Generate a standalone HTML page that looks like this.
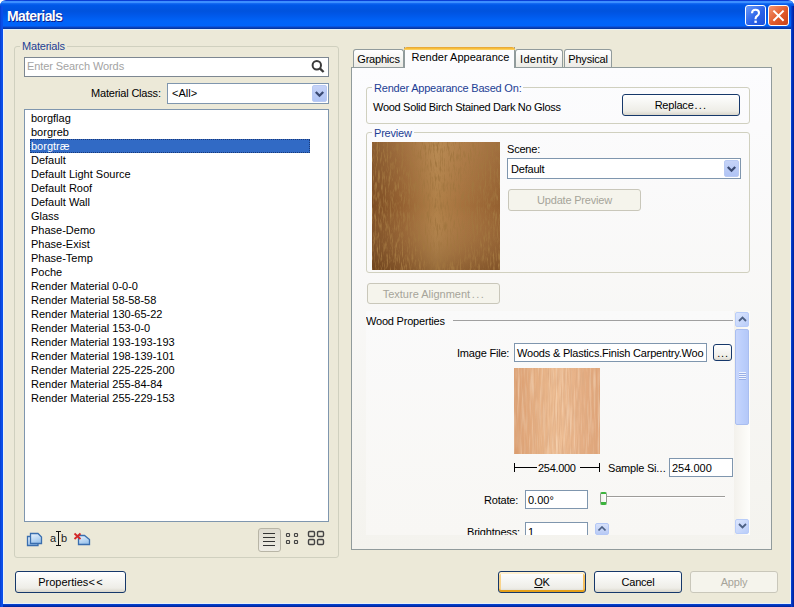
<!DOCTYPE html>
<html><head><meta charset="utf-8">
<style>
*{box-sizing:border-box;margin:0;padding:0}
html,body{width:794px;height:607px;overflow:hidden;background:#fff}
body{position:relative;font-family:"Liberation Sans",sans-serif;font-size:11px;color:#000;letter-spacing:-0.2px}
.a{position:absolute}
.t{position:absolute;white-space:nowrap;line-height:13px;font-size:11px}
#win{position:absolute;left:0;top:0;width:794px;height:607px;border-radius:6px 6px 0 0;overflow:hidden;
 background:linear-gradient(to right,#0030B0 0,#0842D0 1px,#0850E8 2px,#0850E8 3px,transparent 3px,transparent 791px,#0848E0 791px,#0038C0 793px,#002C98 794px)}
#title{position:absolute;left:0;top:0;width:794px;height:29px;
 background:linear-gradient(to bottom,#0B3FD6 0,#0B3FD6 1px,#3D8FFF 1px,#3D8FFF 3px,#1A6FF5 3px,#0058E8 5px,#0053DE 11px,#0056E6 14px,#0063F8 21px,#0064FA 26px,#0D47C8 27px,#003399 29px)}
#client{position:absolute;left:3px;top:29px;width:788px;height:575px;background:#ECE9D8;border-top:1px solid #E4F0FA;border-left:1px solid #E8F2FA;border-right:1px solid #E8F0F8;border-bottom:1px solid #E8F0F8}
#bottomb{position:absolute;left:0;top:604px;width:794px;height:3px;background:linear-gradient(to bottom,#0846D8,#0030B0 60%,#00229A)}
.ttl{position:absolute;left:7px;top:7px;letter-spacing:-0.6px;color:#fff;font-weight:bold;font-size:14px;line-height:16px;padding-top:1px;text-shadow:1px 1px 0 #0A1E8C}
.cap{position:absolute;width:21px;height:21px;border:1px solid #fff;border-radius:3px}
.grp{position:absolute;border:1px solid #D0D0BF;border-radius:3px}
.gcap{position:absolute;color:#1C3E94;white-space:nowrap;line-height:13px;padding:0 2px}
.edit{position:absolute;background:#fff;border:1px solid #7F96AE}
.btn{position:absolute;border:1px solid #16386A;border-radius:3px;background:linear-gradient(to bottom,#FFFFFF 0,#F6F6F3 40%,#EEEDE7 80%,#D9D6CB 100%);text-align:center;line-height:21px}
.dbtn{position:absolute;border:1px solid #C9C7BA;border-radius:3px;background:#F5F4EC;color:#A6A49A;text-align:center;line-height:21px}
.ddb{position:absolute;width:15px;height:17px;border-radius:2px;background:linear-gradient(to bottom,#C6D3F7,#B0C4F5);border:1px solid #B9CAF3}
.tab{position:absolute;border:1px solid #919B9C;border-bottom:none;border-radius:3px 3px 0 0;background:linear-gradient(to bottom,#FFFFFF,#ECEBE6);text-align:center;line-height:19px}
.sb{position:absolute;border-radius:2px;background:linear-gradient(135deg,#DCE6FE,#B9CDF9);border:1px solid #B9CDF9}
</style></head><body>
<div id="win">
 <div id="title"></div>
 <div class="ttl">Materials</div>
 <div class="cap" style="left:745px;top:5px;background:linear-gradient(135deg,#6A9AF8,#2A62E8 55%,#1E50D8)"></div>
 <div class="cap" style="left:768px;top:5px;background:linear-gradient(135deg,#F49470,#E05A2A 55%,#C84218)"></div>
 <svg class="a" style="left:745px;top:5px" width="21" height="21"><path d="M7 8.3 Q7 4.8 10.5 4.8 Q14 4.8 14 8 Q14 9.9 12.1 11 Q10.6 11.9 10.6 13.6 L10.6 14.3" stroke="#fff" stroke-width="2.1" fill="none"/><rect x="9.4" y="15.6" width="2.4" height="2.3" fill="#fff"/></svg>
 <svg class="a" style="left:768px;top:5px" width="21" height="21"><path d="M5.4 5.6 L15.6 15.8 M15.6 5.6 L5.4 15.8" stroke="#fff" stroke-width="2" fill="none"/></svg>
 <div id="client"></div>
 <div id="bottomb"></div>
 <div class="a" style="left:0;top:6px;width:3px;height:601px;background:linear-gradient(to right,#0638C8,#0A4CE4 1px,#0A50EC)"></div>
 <div class="a" style="left:791px;top:6px;width:3px;height:601px;background:linear-gradient(to right,#0844D8,#0030B8 1.5px,#001C98)"></div>
</div>

<!-- left group -->
<div class="grp" style="left:14px;top:46px;width:325px;height:512px"></div>
<div class="gcap" style="left:20px;top:40px;background:#ECE9D8">Materials</div>
<div class="edit" style="left:24px;top:57px;width:305px;height:20px;border-color:#7D8791"></div>
<div class="t" style="left:27px;top:60px;color:#A3A3A3;letter-spacing:-0.1px">Enter Search Words</div>
<svg class="a" style="left:309px;top:58px" width="18" height="18"><circle cx="7.8" cy="7.3" r="4.2" stroke="#3A3A3A" stroke-width="2" fill="none"/><path d="M10.8 10.4 L14.6 14" stroke="#3A3A3A" stroke-width="2.4" fill="none"/></svg>
<div class="t" style="left:91px;top:87px">Material Class:</div>
<div class="edit" style="left:167px;top:83px;width:162px;height:21px"></div>
<div class="t" style="left:172px;top:87px;letter-spacing:0">&lt;All&gt;</div>
<div class="ddb" style="left:312px;top:85px"></div>
<svg class="a" style="left:312px;top:85px" width="16" height="17"><path d="M3.8 7 L7.5 10.7 L11.2 7" stroke="#3A4A72" stroke-width="2.3" fill="none"/></svg>
<div class="edit" style="left:24px;top:109px;width:305px;height:413px"></div>
<div class="a" style="left:30px;top:139px;width:280px;height:14px;background:#316AC5;border:1px dotted #1A3A78"></div>
<div class="t" style="left:31px;top:111px;line-height:14px;letter-spacing:0">borgflag<br>borgreb<br><span style="color:#fff">borgtræ</span><br>Default<br>Default Light Source<br>Default Roof<br>Default Wall<br>Glass<br>Phase-Demo<br>Phase-Exist<br>Phase-Temp<br>Poche<br>Render Material 0-0-0<br>Render Material 58-58-58<br>Render Material 130-65-22<br>Render Material 153-0-0<br>Render Material 193-193-193<br>Render Material 198-139-101<br>Render Material 225-225-200<br>Render Material 255-84-84<br>Render Material 255-229-153</div>

<svg class="a" style="left:26px;top:531px" width="18" height="17"><defs><linearGradient id="ic" x1="0" y1="0" x2="0.4" y2="1"><stop offset="0" stop-color="#EEF6FE"/><stop offset="1" stop-color="#9CC4EC"/></linearGradient></defs><path d="M1.5 5.5 H9 L12 8.5 V14.5 H1.5 Z" fill="url(#ic)" stroke="#3A6EAE" stroke-width="1.3"/><path d="M4.5 2.5 H12 L15.5 6 V12.5 H4.5 Z" fill="url(#ic)" stroke="#3A6EAE" stroke-width="1.3"/></svg>
<div class="t" style="left:50px;top:532px;color:#222">a</div>
<div class="t" style="left:61px;top:532px;color:#222">b</div>
<svg class="a" style="left:55px;top:530px" width="8" height="17" shape-rendering="crispEdges"><path d="M1 1.5 H6 M3.5 1 V16 M1 15.5 H6" stroke="#111" stroke-width="1" fill="none"/></svg>
<svg class="a" style="left:72px;top:530px" width="20" height="17"><path d="M6.5 5.5 H12.5 L17.5 9.5 V14.5 H6.5 Z" fill="url(#ic)" stroke="#3A6EAE" stroke-width="1.3"/><path d="M2.5 3.5 L8.5 9 M8.5 3.5 L2.5 9" stroke="#D42828" stroke-width="1.8"/></svg>
<div class="a" style="left:258px;top:528px;width:23px;height:24px;border:1px solid #B8B5A6;border-radius:3px;background:linear-gradient(to bottom,#DEDBD0,#EEECE4)"></div>
<div class="a" style="left:263px;top:533px;width:12px;height:1px;background:#333;box-shadow:0 4px 0 #333,0 8px 0 #333,0 12px 0 #333"></div>
<svg class="a" style="left:284px;top:532px" width="16" height="12"><rect x="2.5" y="1.5" width="3" height="3" rx="0.8" fill="none" stroke="#444" stroke-width="1.2"/><rect x="10.5" y="1.5" width="3" height="3" rx="0.8" fill="none" stroke="#444" stroke-width="1.2"/><rect x="2.5" y="8.5" width="3" height="3" rx="0.8" fill="none" stroke="#444" stroke-width="1.2"/><rect x="10.5" y="8.5" width="3" height="3" rx="0.8" fill="none" stroke="#444" stroke-width="1.2"/></svg>
<svg class="a" style="left:306px;top:530px" width="20" height="17"><rect x="2.5" y="1.5" width="6" height="5" rx="1.2" fill="none" stroke="#444" stroke-width="1.4"/><rect x="11.5" y="1.5" width="6" height="5" rx="1.2" fill="none" stroke="#444" stroke-width="1.4"/><rect x="2.5" y="9.5" width="6" height="5" rx="1.2" fill="none" stroke="#444" stroke-width="1.4"/><rect x="11.5" y="9.5" width="6" height="5" rx="1.2" fill="none" stroke="#444" stroke-width="1.4"/></svg>

<div class="btn" style="left:15px;top:571px;width:111px;height:22px;line-height:20px;letter-spacing:0">Properties<span style="letter-spacing:1.5px">&lt;</span>&lt;</div>

<!-- tabs -->
<div class="a" style="left:351px;top:67px;width:421px;height:483px;border:1px solid #919B9C;background:linear-gradient(to bottom,#FCFCFE,#F4F3EE)"></div>
<div class="tab" style="left:353px;top:49px;width:51px;height:18px">Graphics</div>
<div class="tab" style="left:515px;top:49px;width:48px;height:18px;letter-spacing:0.3px">Identity</div>
<div class="tab" style="left:564px;top:49px;width:48px;height:18px">Physical</div>
<div class="a" style="left:404px;top:47px;width:111px;height:21px;border:1px solid #919B9C;border-bottom:none;border-top:none;background:#FCFCFE;text-align:center;line-height:21px;letter-spacing:0;padding-left:2px">Render Appearance</div>
<div class="a" style="left:404px;top:47px;width:111px;height:3px;border-radius:4px 4px 0 0;background:linear-gradient(to bottom,#E0A040,#F5B830 40%,#FFD870)"></div>

<div class="grp" style="left:366px;top:87px;width:384px;height:37px"></div>
<div class="gcap" style="left:372px;top:82px;background:#FCFCFE">Render Appearance Based On:</div>
<div class="t" style="left:373px;top:101px;letter-spacing:-0.3px">Wood Solid Birch Stained Dark No Gloss</div>
<div class="btn" style="left:622px;top:94px;width:118px;height:22px">Replace<span style="letter-spacing:1.2px;margin-left:1px">...</span></div>

<div class="grp" style="left:366px;top:132px;width:384px;height:141px"></div>
<div class="gcap" style="left:372px;top:127px;background:#FBFBFD">Preview</div>
<div class="a" style="left:372px;top:142px;width:128px;height:128px;background:linear-gradient(to right,#8A5526,#98622F 20%,#B0804C 50%,#A87846 62%,#9C6834 85%,#976230)"><svg width="128" height="128"><defs><filter id="n1" x="0" y="0" width="100%" height="100%"><feTurbulence type="fractalNoise" baseFrequency="0.6 0.1" numOctaves="3" seed="4"/><feColorMatrix type="matrix" values="0 0 0 0 0.36  0 0 0 0 0.18  0 0 0 0 0.05  3.2 0 0 0 -1.5"/></filter>
<linearGradient id="g1" x1="0" y1="0" x2="1" y2="0"><stop offset="0" stop-color="#7C4C22"/><stop offset="0.25" stop-color="#966232"/><stop offset="0.5" stop-color="#B08048"/><stop offset="0.7" stop-color="#A6723E"/><stop offset="1" stop-color="#946030"/></linearGradient>
<linearGradient id="v1" x1="0" y1="0" x2="0" y2="1"><stop offset="0" stop-color="#FFE0B0" stop-opacity="0.12"/><stop offset="0.5" stop-color="#FFE0B0" stop-opacity="0"/><stop offset="1" stop-color="#3A2008" stop-opacity="0.22"/></linearGradient></defs>
<rect width="128" height="128" fill="url(#g1)"/><rect width="128" height="128" fill="url(#v1)"/><rect width="128" height="128" filter="url(#n1)"/>
</svg></div>
<div class="t" style="left:507px;top:143px">Scene:</div>
<div class="edit" style="left:507px;top:158px;width:234px;height:21px"></div>
<div class="t" style="left:511px;top:163px">Default</div>
<div class="ddb" style="left:724px;top:160px"></div>
<svg class="a" style="left:724px;top:160px" width="16" height="17"><path d="M3.8 7 L7.5 10.7 L11.2 7" stroke="#3A4A72" stroke-width="2.3" fill="none"/></svg>
<div class="dbtn" style="left:508px;top:189px;width:133px;height:22px">Update Preview</div>
<div class="dbtn" style="left:367px;top:283px;width:133px;height:21px;letter-spacing:0;padding-left:1px">Texture Alignment<span style="letter-spacing:1.5px;margin-left:1.5px">...</span></div>

<!-- scroll region -->
<div class="a" style="left:366px;top:311px;width:384px;height:224px;background:linear-gradient(to bottom,#FAFAFA,#F8F7F4);overflow:hidden">
 <div class="t" style="left:0px;top:4px">Wood Properties</div>
 <div class="a" style="left:87px;top:9px;width:280px;height:1px;background:#A0A0A0"></div>
 <div class="t" style="left:91px;top:36px">Image File:</div>
 <div class="edit" style="left:148px;top:32px;width:193px;height:19px"></div>
 <div class="t" style="left:151px;top:36px">Woods &amp; Plastics.Finish Carpentry.Woo</div>
 <div class="btn" style="left:347px;top:33px;width:19px;height:17px;line-height:17px;letter-spacing:0.8px;padding-left:1px">...</div>
 <div class="a" style="left:148px;top:57px;width:86px;height:86px;background:linear-gradient(to right,#E4A678,#EEBC90 35%,#F0C49A 50%,#E8B488 75%,#E6AE82)"><svg width="86" height="86"><defs><filter id="n2" x="0" y="0" width="100%" height="100%"><feTurbulence type="fractalNoise" baseFrequency="0.7 0.05" numOctaves="2" seed="9"/><feColorMatrix type="matrix" values="0 0 0 0 0.72  0 0 0 0 0.4  0 0 0 0 0.22  1.9 0 0 0 -0.7"/></filter>
<filter id="n3" x="0" y="0" width="100%" height="100%"><feTurbulence type="fractalNoise" baseFrequency="0.5 0.03" numOctaves="2" seed="17"/><feColorMatrix type="matrix" values="0 0 0 0 1  0 0 0 0 0.86  0 0 0 0 0.7  1.0 0 0 0 -0.45"/></filter>
<linearGradient id="g2" x1="0" y1="0" x2="1" y2="0"><stop offset="0" stop-color="#DA9C6E"/><stop offset="0.35" stop-color="#E8B488"/><stop offset="0.5" stop-color="#EEBE94"/><stop offset="0.75" stop-color="#E6B086"/><stop offset="1" stop-color="#DEA276"/></linearGradient></defs>
<rect width="86" height="86" fill="url(#g2)"/><rect width="86" height="86" filter="url(#n2)"/><rect width="86" height="86" filter="url(#n3)"/>
</svg></div>
 <div class="a" style="left:148px;top:152px;width:1px;height:9px;background:#000"></div>
 <div class="a" style="left:148px;top:156px;width:23px;height:1px;background:#000"></div>
 <div class="t" style="left:172px;top:151px;letter-spacing:-0.3px">254.000</div>
 <div class="a" style="left:214px;top:156px;width:20px;height:1px;background:#000"></div>
 <div class="a" style="left:233px;top:152px;width:1px;height:9px;background:#000"></div>
 <div class="t" style="left:242px;top:151px">Sample Si<span style="letter-spacing:0.1px">...</span></div>
 <div class="edit" style="left:303px;top:147px;width:64px;height:19px"></div>
 <div class="t" style="left:306px;top:151px;letter-spacing:0">254.000</div>
 <div class="t" style="left:118px;top:183px">Rotate:</div>
 <div class="edit" style="left:159px;top:179px;width:63px;height:19px"></div>
 <div class="t" style="left:162px;top:183px;letter-spacing:0">0.00°</div>
 <div class="a" style="left:238px;top:185px;width:121px;height:2px;border-top:1px solid #9D9C99;border-bottom:1px solid #fff"></div>
 <div class="a" style="left:234px;top:181px;width:7px;height:13px;border-radius:2px;background:linear-gradient(to right,#F0F0EA,#FFFFFF);border:1px solid #8E9A8E;border-top:2px solid #3CB43C;border-bottom:3px solid #3CB43C"></div>
 <div class="t" style="left:101px;top:215px">Brightness:</div>
 <div class="edit" style="left:159px;top:211px;width:63px;height:19px"></div>
 <div class="t" style="left:162px;top:215px">1</div>
 <div class="a" style="left:229px;top:212px;width:14px;height:12px;border-radius:2px;background:linear-gradient(to bottom,#D8E2FA,#B8CAF5);border:1px solid #B4C8F6"></div>
 <svg class="a" style="left:232px;top:215px" width="8" height="5"><path d="M0.5 4.5 L4 1 L7.5 4.5" stroke="#4D6185" stroke-width="1.6" fill="none"/></svg>
 <div class="a" style="left:229px;top:224px;width:14px;height:6px;background:linear-gradient(to bottom,#B8CAF5,#A9BEF2)"></div>
 <div class="a" style="left:368px;top:0;width:16px;height:224px;background:linear-gradient(to right,#F3F1EC,#FEFEFB)"></div>
 <div class="sb" style="left:369px;top:1px;width:14px;height:15px"></div>
 <svg class="a" style="left:372px;top:5px" width="9" height="6"><path d="M1 5 L4.5 1.5 L8 5" stroke="#4D6185" stroke-width="1.8" fill="none"/></svg>
 <div class="a" style="left:369px;top:18px;width:14px;height:96px;border-radius:2px;background:linear-gradient(to right,#C8D6FC,#BCCFFC 50%,#B4C8F8);border:1px solid #A9BEF0"></div>
 <div class="a" style="left:373px;top:61px;width:7px;height:1px;background:#EEF3FE;box-shadow:0 1px 0 #98AEE6,0 2px 0 #EEF3FE,0 3px 0 #98AEE6,0 4px 0 #EEF3FE,0 5px 0 #98AEE6,0 6px 0 #EEF3FE,0 7px 0 #98AEE6"></div>
 <div class="sb" style="left:369px;top:208px;width:14px;height:15px"></div>
 <svg class="a" style="left:372px;top:212px" width="9" height="6"><path d="M1 1 L4.5 4.5 L8 1" stroke="#4D6185" stroke-width="1.8" fill="none"/></svg>
</div>

<div class="btn" style="left:498px;top:571px;width:88px;height:22px;line-height:20px;box-shadow:inset 0 2px 0 #FFF0CF,inset 0 -2px 0 #E5A01A,inset 2px 0 0 #F9D38A,inset -2px 0 0 #F5C060"><span style="text-decoration:underline">O</span>K</div>
<div class="btn" style="left:594px;top:571px;width:88px;height:22px;line-height:20px">Cancel</div>
<div class="dbtn" style="left:690px;top:571px;width:88px;height:22px;line-height:20px">Apply</div>
</body></html>
